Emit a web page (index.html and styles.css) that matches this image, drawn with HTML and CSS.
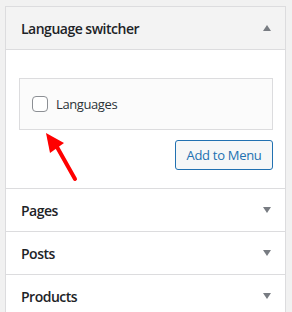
FILE: index.html
```html
<!DOCTYPE html>
<html lang="en">
<head>
    <meta charset="UTF-8">
    <title>Menu items</title>
    <link rel="stylesheet" href="styles.css">
</head>
<body>
    <div class="panel">
        <div class="section open">
            <div class="section-title">
                <span>Language switcher</span>
                <span class="toggle up"></span>
            </div>
            <div class="section-body">
                <div class="item-box">
                    <label class="item">
                        <span class="checkbox"></span>
                        <span>Languages</span>
                    </label>
                </div>
                <div class="actions">
                    <button class="button">Add to Menu</button>
                </div>
            </div>
        </div>
        <div class="section">
            <div class="section-title">
                <span>Pages</span>
                <span class="toggle"></span>
            </div>
        </div>
        <div class="section">
            <div class="section-title">
                <span>Posts</span>
                <span class="toggle"></span>
            </div>
        </div>
        <div class="section">
            <div class="section-title">
                <span>Products</span>
                <span class="toggle"></span>
            </div>
        </div>

        <!-- red annotation arrow pointing at the checkbox -->
        <svg class="pointer" width="40" height="56" viewBox="0 0 40 56">
            <line x1="11" y1="14" x2="29" y2="46" stroke="#f00" stroke-width="4" stroke-linecap="round"/>
            <polygon points="0,0 18,10 4,20" fill="#f00"/>
        </svg>
    </div>
</body>
</html>
```

FILE: styles.css
```css
body {
    margin: 0;
    background-color: #f1f1f1;
    font-family: "Open Sans", "Noto Sans", sans-serif;
    color: #1d2327;
}

.panel {
    position: relative;
    margin: 6px 0 0 5px;
    width: 279px;
    height: 320px;
    background-color: #fff;
    border: 1px solid #dcdcde;
    border-bottom: none;
}

.section {
    border-bottom: 1px solid #dcdcde;
}

.section-title {
    display: flex;
    justify-content: space-between;
    align-items: center;
    height: 42px;
    padding: 0 14px 0 15px;
    font-size: 14px;
    font-weight: 600;
    letter-spacing: -0.5px;
}

.open .section-title {
    background-color: #f3f3f3;
    border-bottom: 1px solid #dcdcde;
}

.toggle {
    width: 0;
    height: 0;
    border-left: 4px solid transparent;
    border-right: 4px solid transparent;
    border-top: 6px solid #787c82;
}

.toggle.up {
    border-top: none;
    border-bottom: 6px solid #787c82;
}

.section-body {
    padding: 28px 12px 18px 13px;
}

.item-box {
    height: 50px;
    display: flex;
    align-items: center;
    padding-left: 12px;
    background-color: #fbfbfb;
    border: 1px solid #dcdcde;
}

.item {
    display: flex;
    align-items: center;
    gap: 8px;
    font-size: 13px;
    color: #2c3338;
    letter-spacing: -0.4px;
}

.checkbox {
    width: 14px;
    height: 14px;
    border: 1px solid #8c8f94;
    border-radius: 4px;
    background-color: #fff;
}

.actions {
    display: flex;
    justify-content: flex-end;
    margin-top: 10px;
}

.button {
    height: 30px;
    width: 98px;
    padding: 0;
    font-family: inherit;
    font-size: 13px;
    letter-spacing: -0.3px;
    color: #2271b1;
    background-color: #f6f7f7;
    border: 1px solid #2271b1;
    border-radius: 3px;
}

.pointer {
    position: absolute;
    left: 40px;
    top: 126px;
}
```
